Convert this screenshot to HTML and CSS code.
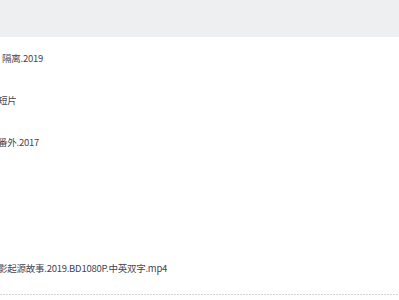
FILE: index.html
```html
<!DOCTYPE html>
<html lang="zh-CN">
<head>
    <meta charset="UTF-8">
    <meta name="viewport" content="width=device-width, initial-scale=1.0">
    <title>文件列表</title>
    <link rel="stylesheet" href="styles.css">
</head>
<body>
    <div class="toolbar"></div>

    <div class="file-list">
        <div class="file-row"><span class="file-name shift-1">隔离.2019</span></div>
        <div class="file-row"><span class="file-name shift-2">短片</span></div>
        <div class="file-row"><span class="file-name shift-2">番外.2017</span></div>
        <div class="file-row"></div>
        <div class="file-row"></div>
        <div class="file-row"><span class="file-name shift-3">影起源故事.2019.BD1080P.中英双字.mp4</span></div>
    </div>

    <div class="list-end"></div>
</body>
</html>
```

FILE: styles.css
```css
body {
    margin: 0;
    padding: 0;
    background: #ffffff;
    font-family: "Noto Sans CJK SC", "Noto Sans", sans-serif;
    overflow: hidden;
}
.toolbar {
    height: 37px;
    background-color: #eeeff1;
}
.file-list {
    display: flex;
    flex-direction: column;
}
.file-row {
    height: 42px;
    display: flex;
    align-items: center;
    overflow: hidden;
}
.file-name {
    display: block;
    font-size: 9.5px;
    letter-spacing: -0.25px;
    color: #45454f;
    white-space: nowrap;
}
/* the list is scrolled sideways, so names start part-way through a glyph */
.shift-1 {
    text-indent: 2px;
}
.shift-2 {
    text-indent: -2px;
}
.shift-3 {
    text-indent: -2px;
}
.list-end {
    margin-top: 5px;
    height: 1px;
    background: repeating-linear-gradient(90deg, #d6d6da 0, #d6d6da 2px, transparent 2px, transparent 3px);
}
```
